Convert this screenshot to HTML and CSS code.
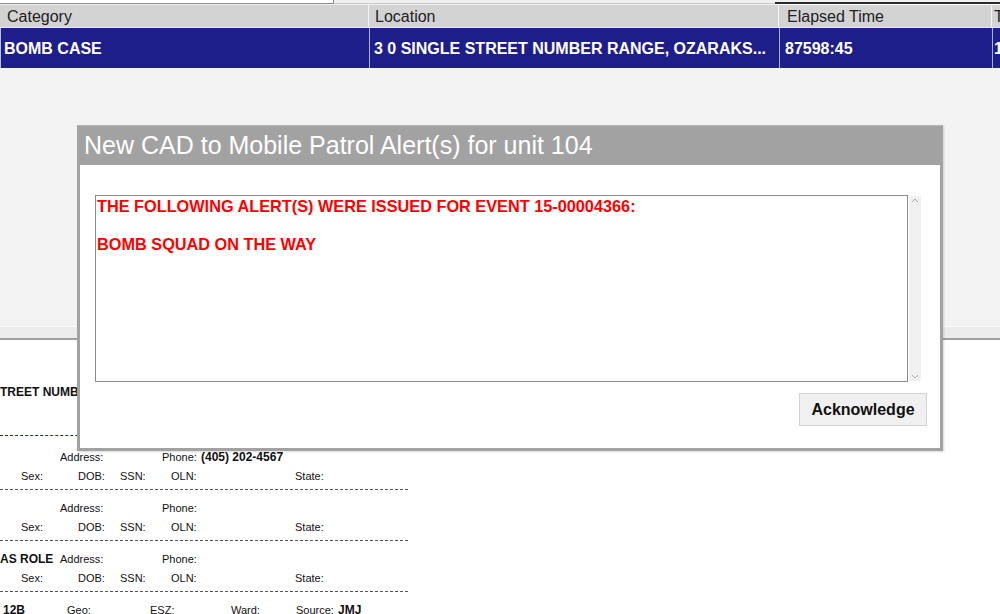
FILE: index.html
```html
<!DOCTYPE html>
<html>
<head>
<meta charset="utf-8">
<link rel="stylesheet" href="styles.css">
</head>
<body>
<div class="page">
  <div class="topstrip">
    <div class="topbox"></div>
    <div class="topmid"></div>
    <div class="topright"></div>
  </div>
  <div class="grid-head">
    <div class="hcell c1">Category</div>
    <div class="hcell c2">Location</div>
    <div class="hcell c3">Elapsed Time</div>
    <div class="hcell c4">T</div>
  </div>
  <div class="grid-row">
    <div class="rcell c1">BOMB CASE</div>
    <div class="rcell c2">3 0 SINGLE STREET NUMBER RANGE, OZARAKS...</div>
    <div class="rcell c3">87598:45</div>
    <div class="rcell c4">1</div>
  </div>
  <div class="grid-empty"></div>
  <div class="splitter"></div>

  <div class="detail">
    <div class="street">TREET NUMB</div>
    <div class="blue-dash"></div>

    <div class="prow">
      <span class="w60"></span><span class="w102">Address:</span><span class="w39">Phone:</span><b>(405) 202-4567</b>
    </div>
    <div class="prow">
      <span class="w21"></span><span class="w57">Sex:</span><span class="w42">DOB:</span><span class="w51">SSN:</span><span class="w124">OLN:</span><span>State:</span>
    </div>
    <div class="gray-dash"></div>

    <div class="prow">
      <span class="w60"></span><span class="w102">Address:</span><span class="w39">Phone:</span>
    </div>
    <div class="prow">
      <span class="w21"></span><span class="w57">Sex:</span><span class="w42">DOB:</span><span class="w51">SSN:</span><span class="w124">OLN:</span><span>State:</span>
    </div>
    <div class="gray-dash"></div>

    <div class="prow">
      <b class="w60">AS ROLE</b><span class="w102">Address:</span><span class="w39">Phone:</span>
    </div>
    <div class="prow">
      <span class="w21"></span><span class="w57">Sex:</span><span class="w42">DOB:</span><span class="w51">SSN:</span><span class="w124">OLN:</span><span>State:</span>
    </div>
    <div class="gray-dash"></div>

    <div class="prow">
      <span class="w3"></span><b class="w64">12B</b><span class="w83">Geo:</span><span class="w81">ESZ:</span><span class="w65">Ward:</span><span class="w42">Source:</span><b>JMJ</b>
    </div>
  </div>
</div>

<div class="dialog">
  <div class="dialog-title">New CAD to Mobile Patrol Alert(s) for unit 104</div>
  <div class="dialog-body">
    <div class="msg-wrap">
      <div class="msg">THE FOLLOWING ALERT(S) WERE ISSUED FOR EVENT 15-00004366:<br><br>BOMB SQUAD ON THE WAY</div>
      <div class="vscroll">
        <svg width="12" height="10" viewBox="0 0 12 10"><polyline points="3,6 6,3 9,6" fill="none" stroke="#b0b0b0" stroke-width="1"/></svg>
        <svg width="12" height="10" viewBox="0 0 12 10"><polyline points="3,4 6,7 9,4" fill="none" stroke="#b0b0b0" stroke-width="1"/></svg>
      </div>
    </div>
    <div class="btn-row">
      <button class="ack">Acknowledge</button>
    </div>
  </div>
</div>
</body>
</html>
```

FILE: styles.css
```css
html, body {
  margin: 0;
  padding: 0;
}
body {
  width: 1000px;
  height: 614px;
  overflow: hidden;
  position: relative;
  font-family: "Liberation Sans", Arial, sans-serif;
  background: #ffffff;
  color: #000;
}
.page {
  display: flex;
  flex-direction: column;
  width: 1000px;
}
.topstrip {
  display: flex;
  height: 5px;
  background: #f0f0f0;
}
.topbox {
  width: 333px;
  height: 3px;
  background: #fff;
  border-right: 1px solid #8a8a8a;
  border-bottom: 1px solid #8a8a8a;
}
.topmid {
  width: 441px;
  border-bottom: 1px solid #c8c8c8;
  height: 3px;
}
.topright {
  flex: 1;
  margin-top: 2px;
  border-top: 2px solid #2a2a2a;
  height: 1px;
  background: #fff;
}
.grid-head {
  display: grid;
  grid-template-columns: 369px 410px 213px 1fr;
  height: 22px;
  background: #d3d3d3;
  border-bottom: 1px solid #e8e8f0;
}
.hcell {
  font-size: 16px;
  line-height: 23px;
  color: #222;
  padding-left: 7px;
  border-right: 1px solid #f4f4f4;
  white-space: nowrap;
  overflow: hidden;
}
.hcell.c2 { padding-left: 6px; }
.hcell.c3 { padding-left: 8px; }
.hcell.c4 { border-right: none; padding-left: 2px; }
.grid-row {
  display: grid;
  grid-template-columns: 369px 410px 213px 1fr;
  height: 40px;
  background: #1e1e8a;
  border-left: 1px solid #c0c0d8;
}
.rcell {
  font-size: 16px;
  font-weight: bold;
  line-height: 41px;
  color: #fff;
  padding-left: 4px;
  border-right: 1px solid #aeb0d8;
  white-space: nowrap;
  overflow: hidden;
}
.rcell.c1 { padding-left: 3px; }
.rcell.c3 { padding-left: 5px; }
.rcell.c4 { border-right: none; padding-left: 1px; }
.grid-empty {
  height: 258px;
  background: #f3f3f3;
  border-bottom: 1px solid #fcfcfc;
}
.splitter {
  height: 11px;
  background: #ececec;
  border-bottom: 2px solid #9e9e9e;
}
.detail {
  display: flex;
  flex-direction: column;
  padding-top: 44px;
  font-size: 11px;
  color: #111;
}
.street {
  font-size: 12px;
  font-weight: bold;
  line-height: 16px;
  white-space: nowrap;
}
.blue-dash {
  width: 420px;
  margin-top: 35px;
  margin-bottom: 12px;
  border-top: 1px dashed #1c1cc8;
}
.prow {
  display: flex;
  height: 18px;
  line-height: 18px;
  margin-bottom: 1px;
  white-space: nowrap;
}
.prow b {
  font-size: 12px;
}
.prow span, .prow b {
  flex: none;
  display: block;
}
.gray-dash {
  width: 408px;
  margin-top: 3px;
  margin-bottom: 9px;
  border-top: 1px dashed #555;
}
.w3 { width: 3px; }
.w21 { width: 21px; }
.w39 { width: 39px; }
.w42 { width: 42px; }
.w51 { width: 51px; }
.w57 { width: 57px; }
.w60 { width: 60px; }
.w64 { width: 64px; }
.w65 { width: 65px; }
.w81 { width: 81px; }
.w83 { width: 83px; }
.w102 { width: 102px; }
.w124 { width: 124px; }

.dialog {
  position: absolute;
  left: 77px;
  top: 125px;
  width: 860px;
  height: 322px;
  border: 3px solid #a2a2a2;
  border-top: 1px solid #b8b8b8;
  background: #fff;
  display: flex;
  flex-direction: column;
  box-shadow: 1px 1px 2px rgba(0,0,0,0.15);
}
.dialog-title {
  height: 39px;
  background: #a2a2a2;
  color: #fff;
  font-size: 25px;
  line-height: 39px;
  padding-left: 4px;
  white-space: nowrap;
}
.dialog-body {
  display: flex;
  flex-direction: column;
  padding: 30px 13px 0 15px;
}
.msg-wrap {
  display: flex;
  height: 187px;
  margin-right: 6px;
}
.msg {
  flex: 1;
  border: 1px solid #8c8c8c;
  padding: 1px 1px;
  font-size: 16.3px;
  font-weight: bold;
  line-height: 19px;
  color: #ff0000;
}
.vscroll {
  width: 12px;
  margin-left: 1px;
  margin-top: 1px;
  margin-bottom: 1px;
  background: #f0f0f0;
  display: flex;
  flex-direction: column;
  justify-content: space-between;
}
.vscroll svg {
  display: block;
}
.btn-row {
  display: flex;
  justify-content: flex-end;
  margin-top: 11px;
}
.ack {
  width: 128px;
  height: 33px;
  background: #f0f0f0;
  border: 1px solid #d2d2d2;
  font-family: "Liberation Sans", Arial, sans-serif;
  font-size: 16px;
  font-weight: bold;
  color: #111;
  padding: 0;
}
```
